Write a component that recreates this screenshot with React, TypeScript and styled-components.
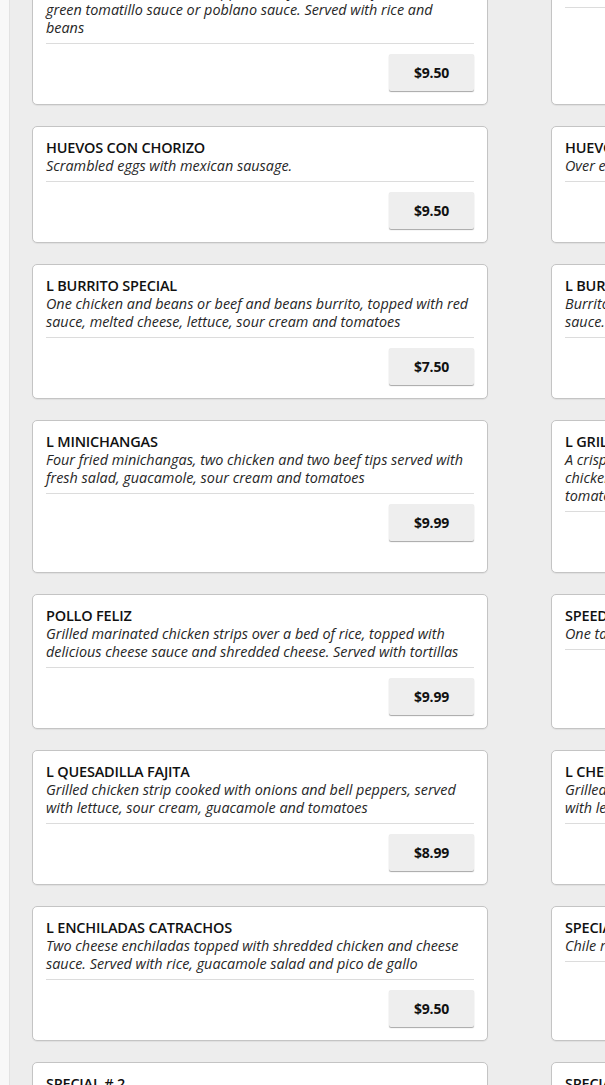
import React from "react";
import styled, { createGlobalStyle } from "styled-components";

interface IItem {
  name: string;
  desc: string;
  price: string;
}

const rows: IItem[][] = [
  [
    {
      name: "L ENCHILADAS VERDES",
      desc: "Three chicken enchiladas topped with your choice of\ngreen tomatillo sauce or poblano sauce. Served with rice and\nbeans",
      price: "$9.50",
    },
    { name: "SPECIAL # 1", desc: "Chile relleno with rice and beans", price: "$8.99" },
  ],
  [
    { name: "HUEVOS CON CHORIZO", desc: "Scrambled eggs with mexican sausage.", price: "$9.50" },
    { name: "HUEVOS RANCHEROS", desc: "Over easy eggs with ranchero sauce.", price: "$9.50" },
  ],
  [
    {
      name: "L BURRITO SPECIAL",
      desc: "One chicken and beans or beef and beans burrito, topped with red\nsauce, melted cheese, lettuce, sour cream and tomatoes",
      price: "$7.50",
    },
    {
      name: "L BURRITO DELUXE",
      desc: "Burrito with your choice of chicken or beef, topped with red\nsauce. Served with rice and beans",
      price: "$8.50",
    },
  ],
  [
    {
      name: "L MINICHANGAS",
      desc: "Four fried minichangas, two chicken and two beef tips served with\nfresh salad, guacamole, sour cream and tomatoes",
      price: "$9.99",
    },
    {
      name: "L GRILLED CHICKEN SALAD",
      desc: "A crispy flour tortilla shell filled with lettuce, grilled\nchicken strips, cheese, sour cream, guacamole and fresh\ntomatoes",
      price: "$9.50",
    },
  ],
  [
    {
      name: "POLLO FELIZ",
      desc: "Grilled marinated chicken strips over a bed of rice, topped with\ndelicious cheese sauce and shredded cheese. Served with tortillas",
      price: "$9.99",
    },
    { name: "SPEEDY GONZALEZ", desc: "One taco, one enchilada and rice or beans", price: "$7.99" },
  ],
  [
    {
      name: "L QUESADILLA FAJITA",
      desc: "Grilled chicken strip cooked with onions and bell peppers, served\nwith lettuce, sour cream, guacamole and tomatoes",
      price: "$8.99",
    },
    {
      name: "L CHEESE STEAK TACOS",
      desc: "Grilled steak tacos with onions and melted cheese, served\nwith lettuce, sour cream and pico de gallo",
      price: "$9.50",
    },
  ],
  [
    {
      name: "L ENCHILADAS CATRACHOS",
      desc: "Two cheese enchiladas topped with shredded chicken and cheese\nsauce. Served with rice, guacamole salad and pico de gallo",
      price: "$9.50",
    },
    { name: "SPECIAL # 3", desc: "Chile relleno and one taco", price: "$8.50" },
  ],
  [
    { name: "SPECIAL # 2", desc: "One enchilada, one taco and one tamale", price: "$8.99" },
    { name: "SPECIAL # 4", desc: "Two enchiladas with rice and beans", price: "$8.50" },
  ],
];

const GlobalStyle = createGlobalStyle`
  html, body {
    margin: 0;
    padding: 0;
    background: #f8f8f8;
    overflow: hidden;
  }
  body {
    font-family: "Open Sans", "Liberation Sans", sans-serif;
    color: #111;
  }
`;

const Page = styled.div`
  width: 1200px;
  height: 1085px;
  overflow: hidden;
`;

const Main = styled.main`
  margin-left: 9px;
  border-left: 1px solid #e2e2e2;
  background: #ededed;
  padding: 0 0 40px 22px;
  min-height: 1200px;
`;

const Grid = styled.div`
  margin-top: -48px;
  display: grid;
  grid-template-columns: 456px 456px;
  column-gap: 63px;
  row-gap: 21px;
`;

const Card = styled.div`
  background: #fff;
  border: 1px solid #c4c4c4;
  border-radius: 5px;
  padding: 12px 13px 13px;
  box-shadow: 0 1px 1px rgba(0, 0, 0, 0.06);
`;

const Head = styled.div`
  padding-bottom: 6px;
  border-bottom: 1px solid #dcdcdc;
`;

const Title = styled.div`
  font-size: 14.5px;
  line-height: 18px;
  font-weight: 600;
  text-transform: uppercase;
  letter-spacing: -0.2px;
  color: #111;
`;

const Desc = styled.div`
  font-size: 14.4px;
  line-height: 18px;
  font-style: italic;
  white-space: pre-line;
  color: #262626;
`;

const Foot = styled.div`
  display: flex;
  justify-content: flex-end;
  padding-top: 10px;
`;

const Price = styled.button`
  width: 85px;
  height: 37px;
  border: none;
  border-radius: 2px;
  background: #eeeeee;
  box-shadow: 0 1px 1px rgba(0, 0, 0, 0.35);
  font-family: "Open Sans", "Liberation Sans", sans-serif;
  font-size: 14px;
  font-weight: 700;
  letter-spacing: -0.2px;
  color: #111;
  cursor: pointer;
`;

const MenuCard = ({ item }: { item: IItem }) => (
  <Card>
    <Head>
      <Title>{item.name}</Title>
      <Desc>{item.desc}</Desc>
    </Head>
    <Foot>
      <Price>{item.price}</Price>
    </Foot>
  </Card>
);

export default function App() {
  return (
    <Page>
      <GlobalStyle />
      <Main>
        <Grid>
          {rows.flat().map((item, i) => (
            <MenuCard key={i} item={item} />
          ))}
        </Grid>
      </Main>
    </Page>
  );
}
